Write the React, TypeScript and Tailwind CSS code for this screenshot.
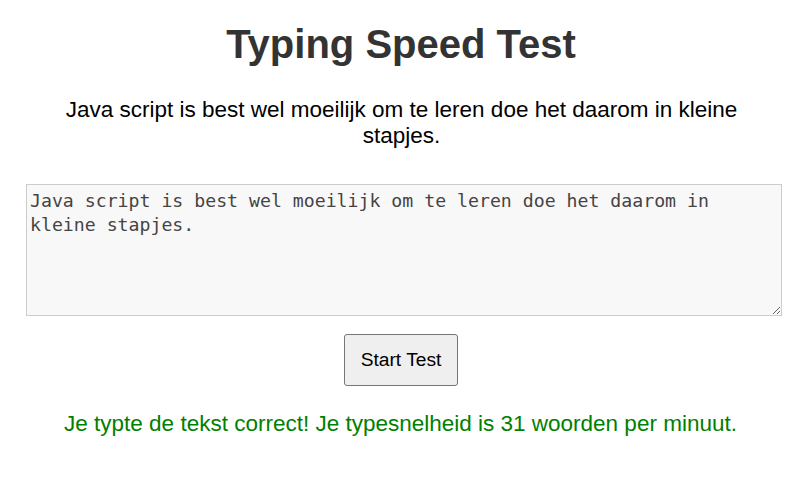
export default function App() {
  const texto = "Java script is best wel moeilijk om te leren doe het daarom in kleine stapjes.";

  return (
    <div className="flex flex-col items-center px-[26px] font-['Liberation_Sans',Arial,sans-serif] text-black">
      <h1 className="mr-[6px] mt-[22px] text-center text-[40px] font-bold leading-[45px] text-[#333]">
        Typing Speed Test
      </h1>

      <p className="mr-[5px] mt-[30px] max-w-[720px] text-center text-[22.5px] leading-[26px]">
        {texto}
      </p>

      <textarea
        className="mt-[35px] box-border block h-[132px] w-full border border-[#ccc] bg-[#f8f8f8] py-[4px] pl-[3px] pr-[4px] font-['DejaVu_Sans_Mono',monospace] text-[18.2px] leading-[24px] text-[#444] outline-none"
        defaultValue={texto}
      />

      <button className="mr-[6px] mt-[18px] box-border h-[52px] w-[114px] rounded-[3px] border border-[#767676] bg-[#efefef] text-[19.2px] leading-[22px] text-black">
        Start Test
      </button>

      <p className="mr-[7px] mt-[25px] text-center text-[22.5px] leading-[26px] text-[#008000]">
        Je typte de tekst correct! Je typesnelheid is 31 woorden per minuut.
      </p>
    </div>
  );
}
